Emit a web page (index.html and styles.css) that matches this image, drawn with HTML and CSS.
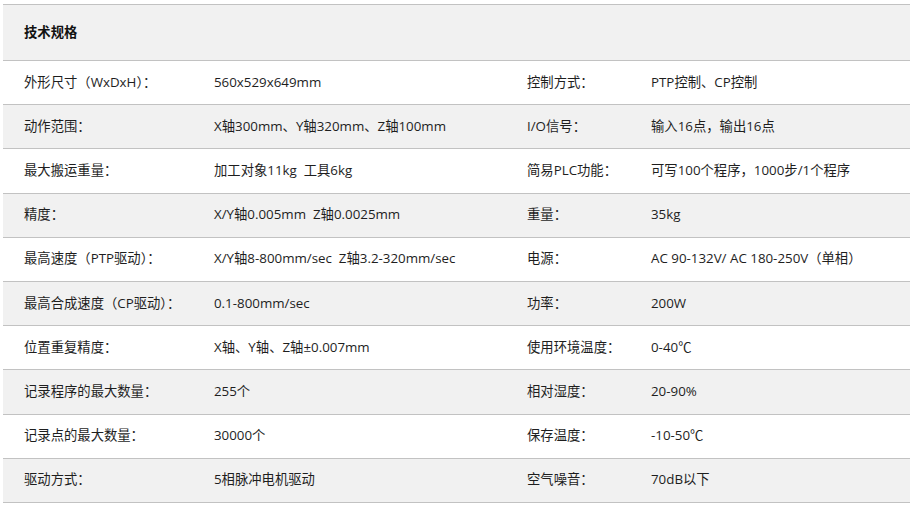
FILE: index.html
```html
<!DOCTYPE html>
<html lang="zh">
<head>
<meta charset="utf-8">
<link rel="stylesheet" href="styles.css">
</head>
<body>
<table class="spec">
  <colgroup>
    <col class="c1"><col class="c2"><col class="c3"><col class="c4">
  </colgroup>
  <thead>
    <tr class="head"><th colspan="4">技术规格</th></tr>
  </thead>
  <tbody>
    <tr><td>外形尺寸（WxDxH）：</td><td>560x529x649mm</td><td>控制方式：</td><td>PTP控制、CP控制</td></tr>
    <tr class="alt"><td>动作范围：</td><td>X轴300mm、Y轴320mm、Z轴100mm</td><td>I/O信号：</td><td>输入16点，输出16点</td></tr>
    <tr><td>最大搬运重量：</td><td>加工对象11kg&nbsp;&nbsp;工具6kg</td><td>简易PLC功能：</td><td>可写100个程序，1000步/1个程序</td></tr>
    <tr class="alt"><td>精度：</td><td>X/Y轴0.005mm&nbsp;&nbsp;Z轴0.0025mm</td><td>重量：</td><td>35kg</td></tr>
    <tr><td>最高速度（PTP驱动）：</td><td>X/Y轴8-800mm/sec&nbsp;&nbsp;Z轴3.2-320mm/sec</td><td>电源：</td><td>AC 90-132V/ AC 180-250V（单相）</td></tr>
    <tr class="alt"><td>最高合成速度（CP驱动）：</td><td>0.1-800mm/sec</td><td>功率：</td><td>200W</td></tr>
    <tr><td>位置重复精度：</td><td>X轴、Y轴、Z轴±0.007mm</td><td>使用环境温度：</td><td>0-40℃</td></tr>
    <tr class="alt"><td>记录程序的最大数量：</td><td>255个</td><td>相对湿度：</td><td>20-90%</td></tr>
    <tr><td>记录点的最大数量：</td><td>30000个</td><td>保存温度：</td><td>-10-50℃</td></tr>
    <tr class="alt"><td>驱动方式：</td><td>5相脉冲电机驱动</td><td>空气噪音：</td><td>70dB以下</td></tr>
  </tbody>
</table>
</body>
</html>
```
FILE: styles.css
```css
html, body {
  margin: 0;
  padding: 0;
  background: #fff;
}
body {
  padding: 4px 0 0 3px;
  font-family: "Open Sans", "Noto Sans CJK SC", sans-serif;
  font-size: 13.33px;
  color: #1e1e1e;
}
.spec {
  width: 907px;
  border-collapse: collapse;
  table-layout: fixed;
  border-top: 1px solid #c2c2c2;
}
.c1 { width: 190px; }
.c2 { width: 313px; }
.c3 { width: 124px; }
.c4 { width: 280px; }
.spec th {
  text-align: left;
  font-weight: bold;
  background: #f1f1f1;
  height: 53px;
  padding: 0 0 2px 21px;
  border-bottom: 1px solid #c2c2c2;
  color: #111;
  font-family: "Noto Sans CJK SC", sans-serif;
  font-size: 13.33px;
  line-height: 18px;
}
.spec td {
  height: 41.2px;
  padding: 0 0 2px 21px;
  border-bottom: 1px solid #c2c2c2;
  white-space: nowrap;
  line-height: 18px;
}
.spec tr.alt td {
  background: #f1f1f1;
}
```
